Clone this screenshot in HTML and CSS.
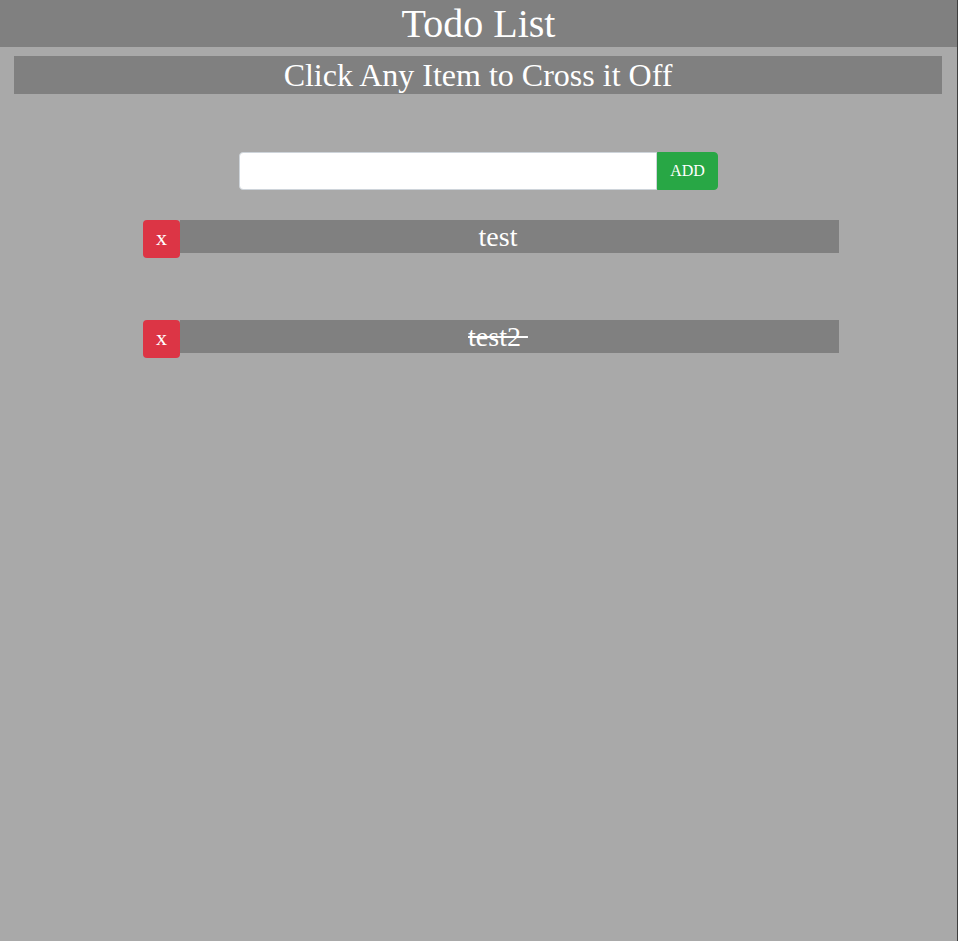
FILE: index.html
```html
<!DOCTYPE html>
<html>
<head>
<meta charset="utf-8">
<title>Todo List</title>
<link rel="stylesheet" href="styles.css">
</head>
<body>
<div class="page">
  <h1 class="title">Todo List</h1>
  <h2 class="subtitle">Click Any Item to Cross it Off</h2>
  <form class="add-form">
    <input class="add-input" type="text">
    <button class="add-btn" type="button">ADD</button>
  </form>
  <ul class="todo-list">
    <li class="todo-item">
      <button class="del-btn" type="button">x</button>
      <span class="todo-text">test</span>
    </li>
    <li class="todo-item">
      <button class="del-btn" type="button">x</button>
      <span class="todo-text"><span class="done">test2 </span></span>
    </li>
  </ul>
</div>
</body>
</html>
```
FILE: styles.css
```css
html {
  background: #3e3e3e;
  height: 100%;
}
body {
  margin: 0;
  width: 957px;
  min-height: 941px;
  background: #a9a9a9;
  font-family: "Liberation Serif", "Times New Roman", serif;
  color: #fff;
}
.page {
  display: flex;
  flex-direction: column;
}
.title {
  margin: 0;
  background: #808080;
  font-size: 40px;
  font-weight: normal;
  line-height: 47px;
  text-align: center;
}
.subtitle {
  margin: 9px 15px 0 14px;
  background: #808080;
  font-size: 32px;
  font-weight: normal;
  line-height: 38px;
  text-align: center;
}
.add-form {
  display: flex;
  justify-content: center;
  margin: 58px 0 0;
}
.add-input {
  box-sizing: border-box;
  width: 418px;
  height: 38px;
  margin: 0;
  border: 1px solid #ced4da;
  border-radius: 4px 0 0 4px;
  background: #fff;
  padding: 6px 12px;
  font-size: 16px;
}
.add-btn {
  box-sizing: border-box;
  width: 61px;
  height: 38px;
  margin: 0;
  border: 1px solid #28a745;
  border-radius: 0 4px 4px 0;
  background: #28a745;
  color: #fff;
  font-family: "Liberation Serif", "Times New Roman", serif;
  font-size: 16px;
  padding: 0;
}
.todo-list {
  list-style: none;
  margin: 30px 0 0 143px;
  padding: 0;
  width: 696px;
  display: flex;
  flex-direction: column;
  gap: 62px;
}
.todo-item {
  display: flex;
  align-items: flex-start;
  height: 38px;
}
.del-btn {
  box-sizing: border-box;
  width: 37px;
  height: 38px;
  margin: 0;
  padding: 0 0 2px;
  border: none;
  border-radius: 4px;
  background: #dc3545;
  color: #fff;
  font-family: "Liberation Serif", "Times New Roman", serif;
  font-size: 22px;
  position: relative;
  z-index: 1;
}
.todo-text {
  flex: 1;
  height: 33px;
  background: #808080;
  font-size: 28px;
  line-height: 33px;
  text-align: center;
  padding-right: 23px;
}
.done {
  text-decoration: line-through;
  white-space: pre;
}
```
